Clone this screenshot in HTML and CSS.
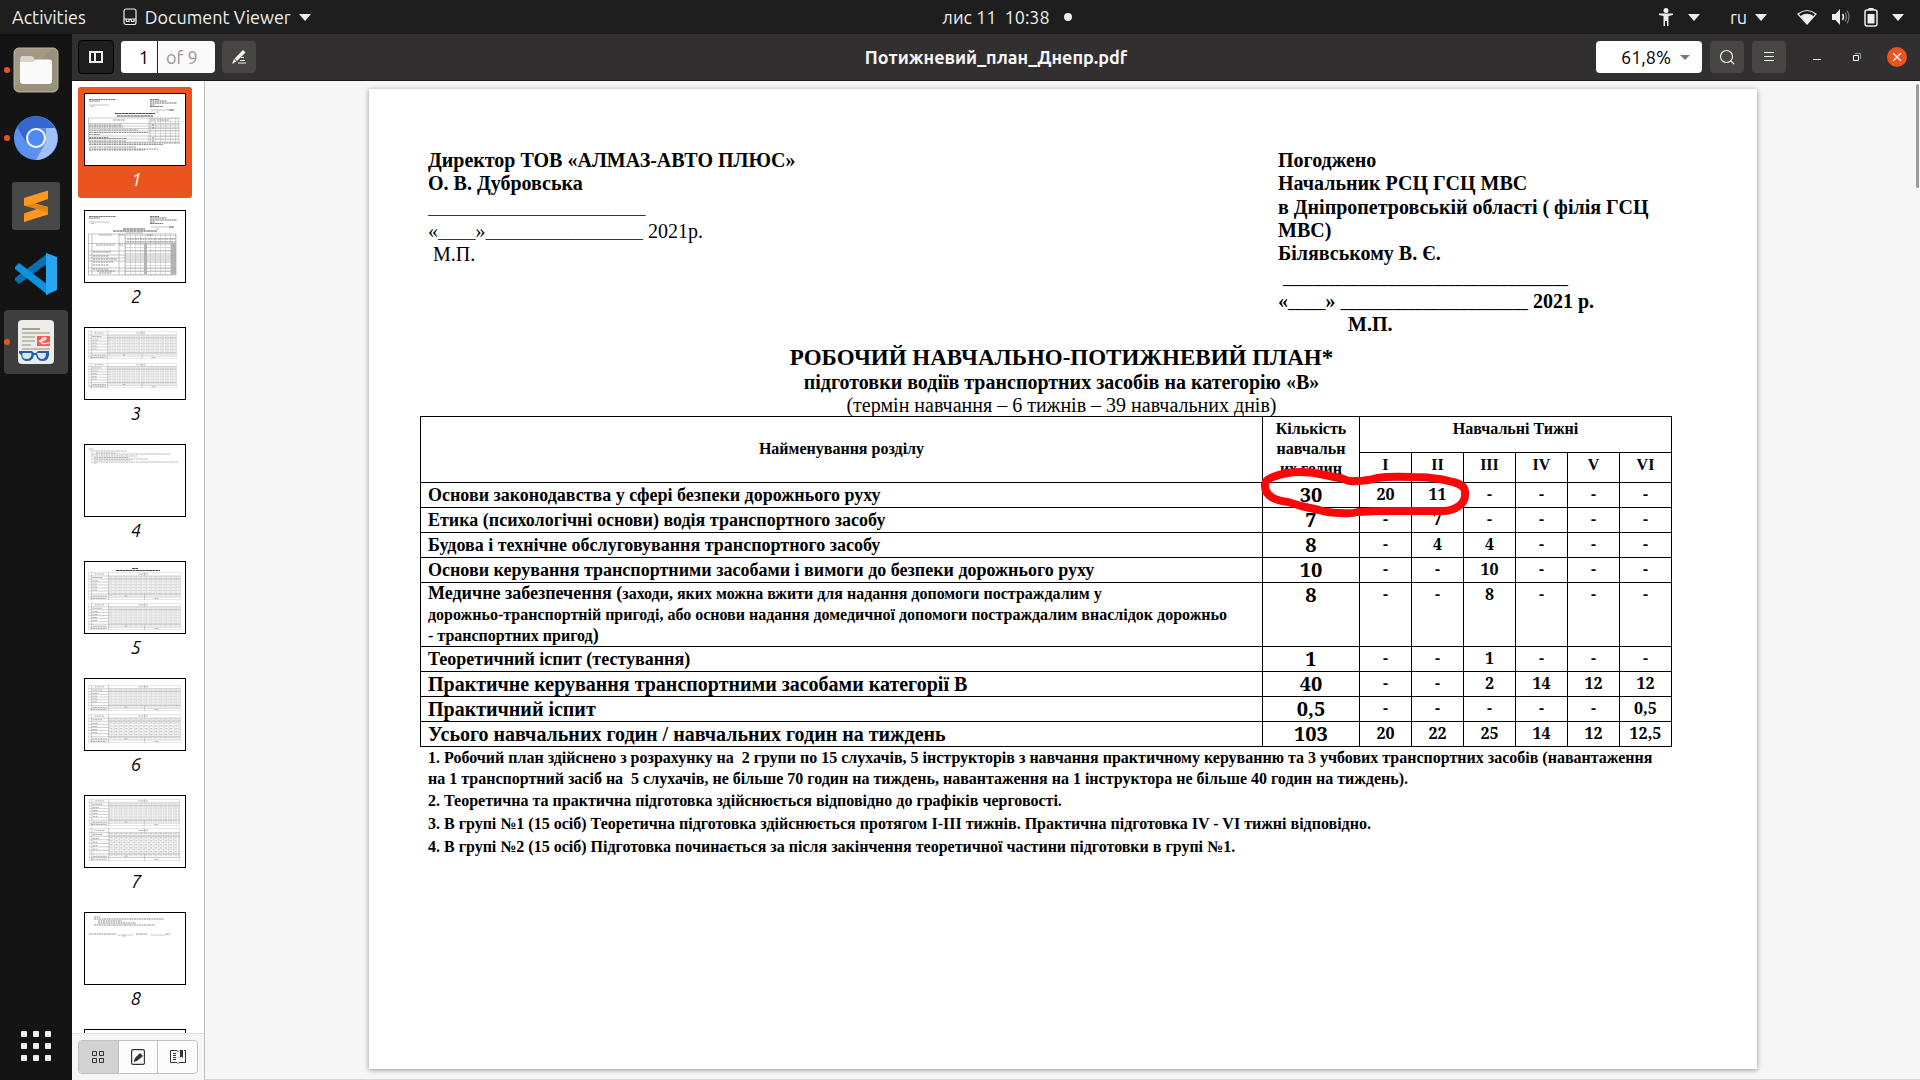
FILE: index.html
```html
<!DOCTYPE html>
<html lang="uk">
<head>
<meta charset="utf-8">
<title>Потижневий_план_Днепр.pdf</title>
<link rel="stylesheet" href="styles.css">
</head>
<body>
<svg class="defs" aria-hidden="true">
  <defs>
    <pattern id="cells" width="5" height="3" patternUnits="userSpaceOnUse">
      <path d="M0 .5H5M.5 0V3" stroke="#ccc" stroke-width=".6"/>
      <path d="M1.5 2H4" stroke="#b4b4b4" stroke-width=".8"/>
    </pattern>
    <pattern id="grid" width="5" height="3" patternUnits="userSpaceOnUse">
      <path d="M0 .5H5M.5 0V3" stroke="#c4c4c4" stroke-width=".6"/>
    </pattern>
    <symbol id="schedule" viewBox="0 0 92 28" preserveAspectRatio="none">
      <rect x="20" y="4" width="72" height="20" fill="url(#cells)"/>
      <path d="M0 0H92V28H0ZM20 0V28M3 0V28M0 4H92M0 7H92M0 10H20M0 13H20M0 16H20M0 19H20M0 22H92M0 25H92M56 0V4M56 22V28" fill="none" stroke="#b0b0b0" stroke-width=".6"/>
      <path d="M6 2H16M50 2H60M4 5.500H14M4 9H10M4 12H9M4 15H9M4 18H9M4 24H18M2 26.500H18M36 24H39M66 26.500H70" stroke="#999" stroke-width=".8" stroke-dasharray="2 .5"/>
    </symbol>
    <symbol id="letterhead" viewBox="0 0 100 20">
      <path d="M4 5.500H31M4 7H15M65 5.500H74M65 7H82M65 9H92M65 11H70M65 12.500H78" stroke="#666" stroke-width=".9" stroke-dasharray="2 .4"/>
      <path d="M4 11H24M66 16H84M6 12.500H9M71 18H74" stroke="#999" stroke-width=".6"/>
      <path d="M84 16H89" stroke="#555"/>
    </symbol>
  </defs>
</svg>

<header class="topbar">
  <div class="topbar-left">
    <a href="#">Activities</a>
    <a class="app-menu" href="#">
      <svg width="14" height="18" viewBox="0 0 14 18" fill="none" stroke="#eee" stroke-width="1.200"><rect x="1" y="1" width="12" height="15.500" rx="2"/><path d="M1 11h2M11 11h2M3 11h3v2.500H3.500zM8 11h3v2.500H8.500zM6 11.500h2"/></svg>
      <span>Document Viewer</span>
      <svg class="caret" viewBox="0 0 12 7"><path d="M0 0h12L6 7z"/></svg>
    </a>
  </div>
  <div class="clock"><time>лис 11&nbsp; 10:38</time><span class="dot"></span></div>
  <div class="topbar-right">
    <div class="indicator">
      <svg width="16" height="18" viewBox="0 0 16 18" fill="#eee"><circle cx="8" cy="2.500" r="2.500"/><path d="M1 5.500h14v1.500l-4.500 1V18H9v-5H7v5H5.500V8L1 7z"/></svg>
      <svg class="caret" viewBox="0 0 12 7"><path d="M0 0h12L6 7z"/></svg>
    </div>
    <div class="indicator lang">
      <span>ru</span>
      <svg class="caret" viewBox="0 0 12 7"><path d="M0 0h12L6 7z"/></svg>
    </div>
    <div class="indicator status">
      <svg width="20" height="16" viewBox="0 0 20 16"><path d="M1 5Q10-2 19 5L10 15Z" fill="none" stroke="#eee" stroke-width="1.200"/><path d="M3.500 7Q10 2.500 16.500 7L10 15Z" fill="#eee"/></svg>
      <svg width="19" height="16" viewBox="0 0 19 16"><path d="M1 5h3.500L9 0v16L4.500 11H1z" fill="#eee"/><path d="M11.500 5q2 3 0 6" fill="none" stroke="#eee" stroke-width="1.500"/><path d="M14 3.500q3 4.500 0 9M16 1.500q4 6.500 0 13" fill="none" stroke="#777" stroke-width="1.300"/></svg>
      <svg width="14" height="19" viewBox="0 0 14 19"><path d="M4.500 0h5v2h-5z" fill="#eee"/><rect x="1" y="2" width="12" height="16" rx="2" fill="none" stroke="#eee" stroke-width="1.500"/><path d="M3.500 6h7v9.500h-7z" fill="#eee"/></svg>
      <svg class="caret" viewBox="0 0 12 7"><path d="M0 0h12L6 7z"/></svg>
    </div>
  </div>
</header>

<div class="desktop">
  <nav class="dock" aria-label="Dock">
    <a class="running" href="#" aria-label="Files"><svg width="46" height="46" viewBox="0 0 46 46"><rect x="1" y="1" width="44" height="44" rx="5" fill="#9b927d"/><path d="M1 40V6q0-5 5-5h34z" fill="#a89f8b" opacity=".6"/><rect x="1" y="1" width="44" height="44" rx="5" fill="none" stroke="#b9b2a0"/><path d="M7 12q0-3 3-3h8q2 0 3 2l1 2h14v8H7z" fill="#d9d5cc"/><path d="M7 15h13l3-2.500h13q3 0 3 3V34q0 3-3 3H10q-3 0-3-3z" fill="#fafafa"/></svg></a>
    <a class="running" href="#" aria-label="Chromium"><svg width="44" height="44" viewBox="0 0 44 44"><circle cx="22" cy="22" r="22" fill="#5b92f0"/><path d="M3 11A22 22 0 0 1 41 12H22L12 26Z" fill="#3566cf"/><path d="M41 12A22 22 0 0 1 22 44L32 26V12Z" fill="#a0c1f9"/><circle cx="22" cy="22" r="10" fill="#fff"/><circle cx="22" cy="22" r="8" fill="#4c8bf5"/></svg></a>
    <a href="#" aria-label="Sublime Text"><svg width="48" height="48" viewBox="0 0 48 48"><rect width="48" height="48" rx="3" fill="#484848"/><path d="M12 16L36 8.500V17L23 21.500 36 25V32.500L12 40V31.500L25 27 12 23.500Z" fill="#ff9820"/><path d="M12 23.500L25 27 36 31V25L23 21.500Z" fill="#e8830c"/></svg></a>
    <a href="#" aria-label="Visual Studio Code"><svg width="44" height="44" viewBox="0 0 44 44"><path d="M1 28L5 32 34 11V1L1 26Z" fill="#0670b4"/><path d="M1 15L5 11 34 33V43L1 17Z" fill="#0d93de"/><path d="M32 1L43 5V38L32 43Z" fill="#28a7f0"/></svg></a>
    <a class="running active" href="#" aria-label="Document Viewer"><svg width="38" height="46" viewBox="0 0 38 46"><rect x="1" y="1" width="36" height="44" rx="4" fill="#ececeb"/><path d="M5 10h18" stroke="#a79f8a" stroke-width="2"/><path d="M5 14h28M5 18h13M5 22h13M5 26h9M5 30h28" stroke="#c2bcae" stroke-width="2"/><rect x="20" y="17" width="13" height="10" fill="#f25a50"/><path d="M22 22q5 0 7-2.500-1-2-3.500 0-3 3 0 5 3 .5 7-1" fill="none" stroke="#fff" stroke-width="1.300"/><path d="M2 32h13l2 2h2l2-2h11v4q-1 6-6 6-6 0-7-6h-2q-1 6-7 6-5 0-6-6l-2-2z" fill="#1a62ad"/><path d="M5.500 34h9q0 6-5 6t-4-6zM20 34h9q0 6-4 6t-5-6z" fill="#dfe5ea"/></svg></a>
    <a class="apps" href="#" aria-label="Show Applications"><svg width="30" height="30" viewBox="0 0 30 30" fill="#eee"><rect width="6" height="6" rx="1"/><rect x="12" width="6" height="6" rx="1"/><rect x="24" width="6" height="6" rx="1"/><rect y="12" width="6" height="6" rx="1"/><rect x="12" y="12" width="6" height="6" rx="1"/><rect x="24" y="12" width="6" height="6" rx="1"/><rect y="24" width="6" height="6" rx="1"/><rect x="12" y="24" width="6" height="6" rx="1"/><rect x="24" y="24" width="6" height="6" rx="1"/></svg></a>
  </nav>

  <main class="window">
    <div class="headerbar">
      <div class="tools">
        <button class="tool pressed" aria-label="Side pane"><svg width="14" height="12" viewBox="0 0 14 12"><path fill-rule="evenodd" d="M0 0h14v12H0zM2 2v8h3V2zM7 2v8h5V2z" fill="#f2f2f2"/></svg></button>
        <div class="pager"><input aria-label="Page" value="1"><span>of 9</span></div>
        <button class="tool" aria-label="Annotate"><svg width="16" height="16" viewBox="0 0 16 16" fill="#f2f2f2"><path d="M12 1l2.500 2.500L6 12l-2.500-2.500zM3 10l2.500 2.500L1 15zM10 8h3v1h-3zM9 11h5v1H9zM7 13.500h8v1H7z"/></svg></button>
      </div>
      <h1 class="title">Потижневий_план_Днепр.pdf</h1>
      <div class="tools end">
        <div class="zoom"><select aria-label="Zoom"><option>61,8%</option></select><svg width="10" height="5" viewBox="0 0 10 5"><path d="M0 0h10L5 5z" fill="#777"/></svg></div>
        <button class="tool" aria-label="Find"><svg width="16" height="16" viewBox="0 0 16 16" fill="none" stroke="#eee" stroke-width="1.200"><circle cx="7.500" cy="7.500" r="6"/><path d="M12 12l3 3"/></svg></button>
        <button class="tool" aria-label="Menu"><svg width="12" height="12" viewBox="0 0 12 12" stroke="#f2f2f2"><path d="M1 1.500h10M1 5.500h10M1 9.500h10"/></svg></button>
        <div class="window-buttons">
          <button aria-label="Minimize"><svg width="8" height="8" viewBox="0 0 8 8"><path d="M0 6.500h8" stroke="#eee"/></svg></button>
          <button aria-label="Restore"><svg width="8" height="8" viewBox="0 0 8 8" fill="none"><path d="M.5 2.500h5v5h-5z" stroke="#fff"/><path d="M2 .5h5.500V6" stroke="#999"/></svg></button>
          <button class="close" aria-label="Close"><svg width="8" height="8" viewBox="0 0 8 8" stroke="#fff" stroke-width="1.300"><path d="M0 0l8 8M8 0L0 8"/></svg></button>
        </div>
      </div>
    </div>

    <div class="body">
      <aside class="sidebar">
        <div class="thumbs">
          <a class="thumb selected" href="#"><svg viewBox="0 0 100 71"><use href="#letterhead" width="100" height="20"/><path d="M30 19.500H70M32 22H68" stroke="#444" stroke-dasharray="3 .4"/><rect x="64" y="24" width="30" height="24" fill="url(#grid)"/><path d="M3.500 24H94V48H3.500ZM64 24V48M3.500 29.500H94M3.500 32H94M3.500 34.500H94M3.500 37H94M3.500 42H94M3.500 45H94" fill="none" stroke="#aaa" stroke-width=".6"/><path d="M28 26H40M4 31H37M4 33H38M4 36H53M4 38.500H63M4 40.500H15M4 43.500H24M4 44.500H42M4 47H41M66 26H70M72 26H84M67 31H69M67 34H69M67 44H69M67 47H69M4 49H95M4 50.500H78M4 53H51M4 55H74M4 56H60" stroke="#777" stroke-width=".8" stroke-dasharray="2 .5"/></svg><span>1</span></a>
          <a class="thumb" href="#"><svg viewBox="0 0 100 71"><use href="#letterhead" width="100" height="20"/><path d="M38 18H60M28 20H72" stroke="#555" stroke-dasharray="3 .4"/><path d="M41 22H58M14 24H27" stroke="#999" stroke-width=".7"/><rect x="40" y="23" width="51" height="41" fill="url(#grid)"/><path d="M59 32h3v31h-3zM86 32h5v31h-5z" fill="#b5b5b5"/><path d="M3.500 23H91V64H3.500ZM7 23V64M34 23V64M40 23V64M3.500 32.500H91M3.500 40H91M3.500 44H91M3.500 47H91M3.500 50H91M3.500 57H91M3.500 60H91" fill="none" stroke="#aaa" stroke-width=".7"/><path d="M11 34H30M8 41H26M8 45H24M8 48H32M8 51H28M8 54H24M8 58H23M12 60H30M14 62H27M34 24H39M34 34H38M62 24H68M42 28H90M42 31H90" stroke="#777" stroke-width=".8" stroke-dasharray="2 .6"/></svg><span>2</span></a>
          <a class="thumb" href="#"><svg viewBox="0 0 100 71"><use href="#schedule" x="3.500" y="3" width="88" height="28"/><use href="#schedule" x="3.500" y="35" width="88" height="25"/></svg><span>3</span></a>
          <a class="thumb" href="#"><svg viewBox="0 0 100 71"><path d="M4 4H9M6 6H42M11 8H31M6 9H86M6 11H52M9 12.500H44M6 14H63M9 15H46M6 17H93M9 18H12" stroke="#999" stroke-width=".7" stroke-dasharray="2 .5"/></svg><span>4</span></a>
          <a class="thumb" href="#"><svg viewBox="0 0 100 71"><path d="M47 6.500H53M31 8.500H75" stroke="#444" stroke-dasharray="3 .3"/><use href="#schedule" x="3.500" y="10" width="92" height="28"/><use href="#schedule" x="3.500" y="41" width="92" height="27"/></svg><span>5</span></a>
          <a class="thumb" href="#"><svg viewBox="0 0 100 71"><use href="#schedule" x="3.500" y="6" width="92" height="26"/><use href="#schedule" x="3.500" y="35" width="92" height="29"/></svg><span>6</span></a>
          <a class="thumb" href="#"><svg viewBox="0 0 100 71"><use href="#schedule" x="4" y="3" width="91" height="27"/><use href="#schedule" x="4" y="32" width="91" height="33"/></svg><span>7</span></a>
          <a class="thumb" href="#"><svg viewBox="0 0 100 71"><path d="M9 4H15M9 6H79M13 8H37M13 10H51M9 12H70M4 21H31M51 21H62M81 21H85M38 23H41" stroke="#777" stroke-width=".8" stroke-dasharray="2 .5"/><path d="M32 22H48M65 22H81" stroke="#aaa" stroke-width=".6"/></svg><span>8</span></a>
          <a class="thumb" href="#" aria-label="Page 9"><svg viewBox="0 0 100 71"></svg></a>
        </div>
        <div class="views">
          <div class="view-switch">
            <button class="on" aria-label="Thumbnails"><svg width="12" height="12" viewBox="0 0 12 12" fill="none" stroke="#333"><path d="M.5.5h4v4h-4zM7.500.5h4v4h-4zM.5 7.500h4v4h-4zM7.500 7.500h4v4h-4z"/></svg></button>
            <button aria-label="Annotations"><svg width="14" height="16" viewBox="0 0 14 16"><rect x=".6" y=".6" width="12.800" height="14.800" rx="1.500" fill="none" stroke="#333" stroke-width="1.200"/><path d="M9 4l3 3-6 5-3.500 1L4 9z" fill="#333"/></svg></button>
            <button aria-label="Bookmarks"><svg width="16" height="14" viewBox="0 0 16 14" fill="none" stroke="#333"><path d="M7 .5H.5v12H7l1 1 1-1h6.500V.5H14M3 3.500h3M3 5.500h3M3 7.500h3M3 9.500h3M7 .5l1 1 1-1"/><path d="M10 0h3v8l-1.500-1.500L10 8z" fill="#333" stroke="none"/></svg></button>
          </div>
        </div>
      </aside>

      <section class="viewer">
        <article class="page">
          <div class="approvals">
            <div class="approval">
              <div><p>Директор ТОВ «АЛМАЗ-АВТО ПЛЮС»</p><p>О. В. Дубровська</p></div>
              <div class="light"><p><span class="rule">_____________________________</span></p></div>
              <div class="light"><p>«<span class="rule">_____</span>»<span class="rule">_____________________</span> 2021р.</p><p>&nbsp;М.П.</p></div>
            </div>
            <div class="approval agreed">
              <div><p>Погоджено</p><p>Начальник РСЦ ГСЦ МВС</p></div>
              <div><p>в Дніпропетровській області ( філія ГСЦ МВС)</p><p>Білявському В. Є.</p></div>
              <div><p>&nbsp;<span class="rule">______________________________________</span></p></div>
              <div><p>«<span class="rule">_____</span>» <span class="rule">_________________________</span> 2021 р.</p><p class="stamp">М.П.</p></div>
            </div>
          </div>

          <div class="heading">
            <h2>РОБОЧИЙ НАВЧАЛЬНО-ПОТИЖНЕВИЙ ПЛАН*</h2>
            <h3>підготовки водіїв транспортних засобів на категорію «В»</h3>
            <p>(термін навчання – 6 тижнів – 39 навчальних днів)</p>
          </div>

          <table class="plan">
            <colgroup><col><col class="col-hours"><col class="col-week" span="6"></colgroup>
            <thead>
              <tr class="head-top"><th class="name-head" rowspan="2">Найменування розділу</th><th rowspan="2">Кількість<br>навчальн<br>их годин</th><th colspan="6">Навчальні Тижні</th></tr>
              <tr class="head-weeks"><th>I</th><th>II</th><th>III</th><th>IV</th><th>V</th><th>VI</th></tr>
            </thead>
            <tbody>
              <tr><td>Основи законодавства у сфері безпеки дорожнього руху</td><td class="marked">30<svg class="ink" width="220" height="58" viewBox="0 0 220 58"><path d="M12 21Q13 16 20 14Q32 9 48 9Q60 9 72 12Q84 15 88 15Q96 19 102 18Q114 18 124 15Q136 13 158 14Q170 14 178 15Q190 16 200 19Q212 22 212 29Q213 38 206 43Q199 48 190 48L132 48Q118 48 105 49Q98 51 88 50Q76 50 66 47L48 43L35 39Q26 38 20 35Q11 30 12 21Z"/></svg></td><td>20</td><td>11</td><td>-</td><td>-</td><td>-</td><td>-</td></tr>
              <tr><td>Етика (психологічні основи) водія транспортного засобу</td><td>7</td><td>-</td><td>7</td><td>-</td><td>-</td><td>-</td><td>-</td></tr>
              <tr><td>Будова і технічне обслуговування транспортного засобу</td><td>8</td><td>-</td><td>4</td><td>4</td><td>-</td><td>-</td><td>-</td></tr>
              <tr><td>Основи керування транспортними засобами і вимоги до безпеки дорожнього руху</td><td>10</td><td>-</td><td>-</td><td>10</td><td>-</td><td>-</td><td>-</td></tr>
              <tr class="medical"><td>Медичне забезпечення (<small>заходи, яких можна вжити для надання допомоги постраждалим у<br>дорожньо-транспортній пригоді, або основи надання домедичної допомоги постраждалим внаслідок дорожньо<br>- транспортних пригод</small>)</td><td>8</td><td>-</td><td>-</td><td>8</td><td>-</td><td>-</td><td>-</td></tr>
              <tr><td>Теоретичний іспит (тестування)</td><td>1</td><td>-</td><td>-</td><td>1</td><td>-</td><td>-</td><td>-</td></tr>
              <tr class="large"><td>Практичне керування транспортними засобами категорії В</td><td>40</td><td>-</td><td>-</td><td>2</td><td>14</td><td>12</td><td>12</td></tr>
              <tr class="large"><td>Практичний іспит</td><td>0,5</td><td>-</td><td>-</td><td>-</td><td>-</td><td>-</td><td>0,5</td></tr>
              <tr class="large"><td>Усього навчальних годин / навчальних годин на тиждень</td><td>103</td><td>20</td><td>22</td><td>25</td><td>14</td><td>12</td><td>12,5</td></tr>
            </tbody>
          </table>

          <div class="notes">
            <p>1. Робочий план здійснено з розрахунку на&nbsp; 2 групи по 15 слухачів, 5 інструкторів з навчання практичному керуванню та 3 учбових транспортних засобів (навантаження<br>на 1 транспортний засіб на&nbsp; 5 слухачів, не більше 70 годин на тиждень, навантаження на 1 інструктора не більше 40 годин на тиждень).</p>
            <p>2. Теоретична та практична підготовка здійснюється відповідно до графіків черговості.</p>
            <p>3. В групі №1 (15 осіб) Теоретична підготовка здійснюється протягом I-III тижнів. Практична підготовка IV - VI тижні відповідно.</p>
            <p>4. В групі №2 (15 осіб) Підготовка починається за після закінчення теоретичної частини підготовки в групі №1.</p>
          </div>
        </article>
        <div class="scrollbar"></div>
      </section>
    </div>
  </main>
</div>
</body>
</html>
```
FILE: styles.css
```css
* { box-sizing: border-box; }
body {
  margin: 0;
  height: 100vh;
  display: flex;
  flex-direction: column;
  overflow: hidden;
  font: 18px/24px Ubuntu, "Noto Sans", sans-serif;
  color: #000;
}
h1, h2, h3, p { margin: 0; }
a { color: inherit; text-decoration: none; }
button { padding: 0; border: 0; background: none; font: inherit; }
svg { display: block; flex: none; }
.defs { position: absolute; width: 0; height: 0; }

/* System top bar */
.topbar {
  flex: none;
  height: 34px;
  padding: 0 16px 0 12px;
  display: grid;
  grid-template-columns: 1fr auto 1fr;
  align-items: center;
  background: #1e1e1e;
  color: #eee;
}
.topbar-left, .app-menu, .clock, .topbar-right, .indicator { display: flex; align-items: center; }
.topbar-left { gap: 37px; }
.app-menu { gap: 8px; }
.clock { gap: 14px; padding-left: 98px; }
.dot { width: 8px; height: 8px; border-radius: 50%; background: #eee; }
.topbar-right { justify-content: flex-end; gap: 30px; }
.indicator { gap: 14px; }
.indicator.lang { gap: 8px; }
.caret { width: 12px; height: 7px; fill: #eee; }

.desktop { flex: 1; min-height: 0; display: flex; }

/* Dock */
.dock {
  width: 72px;
  padding: 4px;
  display: flex;
  flex-direction: column;
  gap: 4px;
  background: #141414;
}
.dock a {
  position: relative;
  height: 64px;
  display: flex;
  align-items: center;
  justify-content: center;
  border-radius: 4px;
}
.dock .active { background: #3e3e3e; }
.dock .running::before {
  content: "";
  position: absolute;
  left: 0;
  top: 29px;
  width: 6px;
  height: 6px;
  border-radius: 50%;
  background: #e95420;
}
.dock .apps { height: 60px; margin-top: auto; }

/* Window header */
.window { flex: 1; min-width: 0; display: flex; flex-direction: column; }
.headerbar {
  flex: none;
  height: 47px;
  padding: 0 13px 0 6px;
  display: grid;
  grid-template-columns: 1fr auto 1fr;
  align-items: center;
  background: #322f30;
  border-bottom: 1px solid #1c1a1b;
}
.title {
  padding-left: 7px;
  font-size: 18px;
  line-height: 24px;
  font-weight: 700;
  color: #f5f5f5;
}
.tools { display: flex; align-items: center; gap: 7px; }
.tools.end { justify-content: flex-end; gap: 8px; }
.tool {
  width: 34px;
  height: 32px;
  display: grid;
  place-items: center;
  border-radius: 4px;
  background: #474644;
}
.tool.pressed { width: 36px; height: 34px; background: #1f1f1f; border: 1px solid #000; }
.pager {
  width: 94px;
  height: 32px;
  display: flex;
  align-items: center;
  border-radius: 4px;
  background: #fafafa;
  color: #999;
  overflow: hidden;
}
.pager input {
  width: 37px;
  height: 32px;
  padding: 0 8px 0 0;
  border: 0;
  border-right: 1px solid #222;
  background: #fff;
  font: inherit;
  text-align: right;
}
.pager span { padding-left: 8px; }
.zoom {
  width: 106px;
  height: 32px;
  padding-right: 12px;
  display: flex;
  align-items: center;
  border-radius: 4px;
  background: #fff;
}
.zoom select {
  flex: 1;
  height: 32px;
  padding: 0 0 0 25px;
  appearance: none;
  border: 0;
  background: none;
  color: #000;
  font: inherit;
}
.window-buttons { display: flex; gap: 20px; padding-left: 13px; }
.window-buttons button { width: 20px; height: 20px; display: grid; place-items: center; }
.window-buttons .close { border-radius: 50%; background: #e95420; }

/* Side pane */
.body { flex: 1; min-height: 0; display: flex; }
.sidebar {
  width: 133px;
  flex: none;
  display: flex;
  flex-direction: column;
  background: #fff;
  border-right: 1px solid #c0c0c0;
}
.thumbs {
  flex: 1;
  min-height: 0;
  padding: 6px 12px 0 6px;
  display: flex;
  flex-direction: column;
  gap: 6px;
  overflow: hidden;
}
.thumb {
  flex: none;
  padding: 6px;
  border-radius: 3px;
  text-align: center;
  font-style: italic;
  line-height: 26px;
}
.thumb svg { width: 102px; height: 73px; border: 1px solid #000; background: #fff; }
.thumb span { display: block; padding-left: 2px; }
.thumb.selected { background: #e95420; color: #fff; }
.views { flex: none; padding: 6px; border-top: 1px solid #ddd; background: #f6f6f6; }
.view-switch {
  height: 34px;
  display: flex;
  border: 1px solid #c0c0c0;
  border-radius: 4px;
  background: #fcfcfc;
  overflow: hidden;
}
.view-switch button { flex: 1; display: grid; place-items: center; }
.view-switch button + button { border-left: 1px solid #c0c0c0; }
.view-switch .on { background: #d2d2d2; }

/* Page view */
.viewer {
  position: relative;
  flex: 1;
  min-width: 0;
  padding: 8px 163px 10px 164px;
  background: #f6f6f6;
  border-bottom: 1px solid #d8d8d8;
}
.scrollbar {
  position: absolute;
  right: 1px;
  top: 3px;
  width: 3px;
  height: 104px;
  border-radius: 2px;
  background: #9c9c9c;
}
.page {
  height: 100%;
  padding: 60px 62px 0 59px;
  background: #fff;
  box-shadow: 0 1px 5px rgba(0, 0, 0, .4);
  font: 700 20px/23px "Liberation Serif", serif;
}
.approvals { display: flex; justify-content: space-between; }
.approval { display: flex; flex-direction: column; gap: 1px; }
.agreed { width: 417px; }
.light { font-weight: 400; }
.rule { font-size: 15px; line-height: 15px; }
.stamp { padding-left: 70px; }
.heading { margin-top: 8px; text-align: center; }
.heading h2 { font-size: 23px; line-height: 27px; }
.heading h3 { font-size: 20px; line-height: 23px; }
.heading p { font-weight: 400; line-height: 22px; }

.plan {
  width: calc(100% - 15px);
  margin-left: -8px;
  border-collapse: collapse;
  table-layout: fixed;
}
.col-hours { width: 97px; }
.col-week { width: 52px; }
.plan th, .plan td { padding: 0; border: 1px solid #000; vertical-align: top; }
.plan th { padding-top: 2px; font-size: 16px; line-height: 20px; }
.plan .name-head { padding: 0 0 2px; vertical-align: middle; }
.head-top { height: 36px; }
.head-weeks { height: 30px; }
.plan tbody tr { height: 25px; }
.plan td {
  font: 700 16px/22px "Noto Serif", "DejaVu Serif Condensed", serif;
  text-align: center;
}
.plan td:nth-child(2) { font-size: 20px; line-height: 24px; }
.plan td:first-child {
  padding-left: 7px;
  font: 700 18px/24px "Liberation Serif", serif;
  text-align: left;
  white-space: nowrap;
}
.plan .large td:first-child { font-size: 20px; }
.plan .medical { height: 64px; }
.plan .medical td:first-child { line-height: 21px; }
.medical small { font-size: 16px; }
.marked { position: relative; }
.ink { position: absolute; left: -10px; top: -20px; z-index: 1; }
.ink path { fill: none; stroke: #f80808; stroke-width: 8; stroke-linejoin: round; }

.notes { font-size: 16px; line-height: 23px; white-space: nowrap; }
.notes p:first-child { line-height: 21px; }
```
